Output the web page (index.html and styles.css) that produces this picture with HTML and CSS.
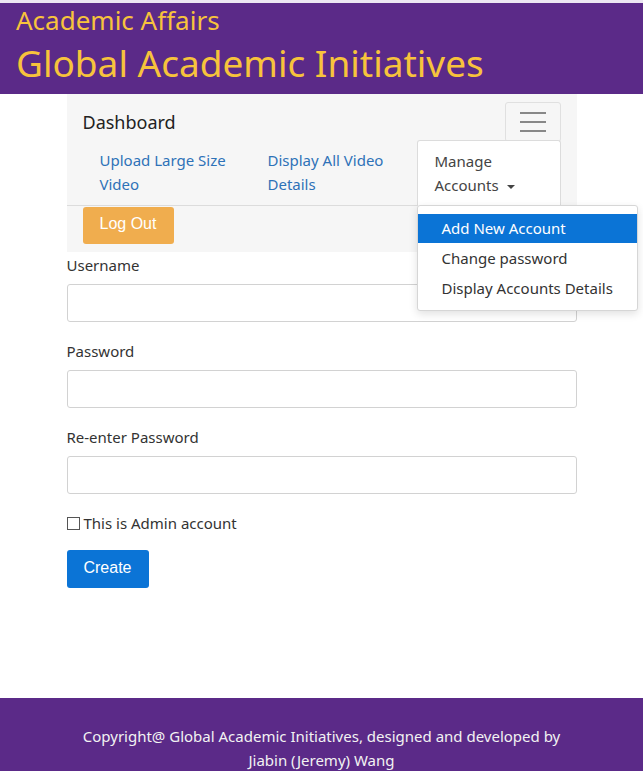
FILE: index.html
```html
<!DOCTYPE html>
<html lang="en">
<head>
<meta charset="utf-8">
<title>Add New Account</title>
<link rel="stylesheet" href="styles.css">
</head>
<body>
<header class="site-header">
  <div class="sub-title">Academic Affairs</div>
  <div class="main-title">Global Academic Initiatives</div>
</header>

<main class="page">
  <nav class="navbar">
    <div class="nav-head">
      <span class="brand">Dashboard</span>
      <button class="toggler" type="button" aria-label="Toggle navigation">
        <span class="bar"></span><span class="bar"></span><span class="bar"></span>
      </button>
    </div>
    <ul class="nav-links">
      <li class="nav-item w1"><a href="#">Upload Large Size Video</a></li>
      <li class="nav-item w2"><a href="#">Display All Video Details</a></li>
      <li class="nav-item w3 open"><a href="#">Manage Accounts <span class="caret"></span></a></li>
    </ul>
    <div class="nav-foot">
      <button class="btn-logout" type="button">Log Out</button>
    </div>
    <ul class="dropdown">
      <li class="active"><a href="#">Add New Account</a></li>
      <li><a href="#">Change password</a></li>
      <li><a href="#">Display Accounts Details</a></li>
    </ul>
  </nav>

  <form class="form">
    <label class="field-label" for="u">Username</label>
    <input class="field" id="u" type="text">
    <label class="field-label" for="p">Password</label>
    <input class="field" id="p" type="password">
    <label class="field-label" for="p2">Re-enter Password</label>
    <input class="field" id="p2" type="password">
    <label class="check"><input type="checkbox" class="check-box"> This is Admin account</label>
    <button class="btn-create" type="button">Create</button>
  </form>
</main>

<footer class="site-footer">
  Copyright@ Global Academic Initiatives, designed and developed by<br>
  Jiabin (Jeremy) Wang
</footer>
</body>
</html>
```

FILE: styles.css
```css
* { box-sizing: border-box; }
html, body { margin: 0; padding: 0; }
body {
  font-family: "Noto Sans", "Open Sans", sans-serif;
  font-size: 15px;
  color: #333;
  background: #fff;
  border-top: 3px solid #ece6f2;
  min-height: 771px;
  display: flex;
  flex-direction: column;
}
a { text-decoration: none; }
ul { list-style: none; margin: 0; padding: 0; }

.site-header {
  background: #5b2a88;
  color: #f7c33c;
  padding: 1px 16px 0;
  height: 91px;
}
.sub-title { font-size: 26px; line-height: 32px; }
.main-title { font-size: 37px; line-height: 54px; }

.page {
  width: 510px;
  margin: 0 auto;
  flex: 1;
}

.navbar {
  position: relative;
  background: #f6f6f6;
  padding-bottom: 8px;
}
.nav-head {
  display: flex;
  justify-content: space-between;
  align-items: flex-start;
  padding: 8px 16px 0;
  height: 46px;
}
.brand { font-size: 18px; line-height: 40px; color: #222; }
.toggler {
  width: 56px;
  height: 40px;
  border: 1px solid #e0e0e0;
  border-radius: 3px;
  background: transparent;
  display: flex;
  flex-direction: column;
  align-items: center;
  justify-content: center;
  gap: 7px;
  padding: 0;
}
.bar { display: block; width: 26px; height: 2px; background: #888; }

.nav-links {
  display: flex;
  padding: 0 16px;
  height: 66px;
  border-bottom: 1px solid #dcdcdc;
}
.nav-item { padding: 8px 17px 0; line-height: 24px; }
.nav-item a { color: #2e72b8; }
.w1 { width: 168px; }
.w2 { width: 166px; }
.w3 { width: 144px; }
.nav-item.open {
  background: #fff;
  border: 1px solid #dcdcdc;
  border-bottom: none;
  border-radius: 3px 3px 0 0;
  margin-bottom: -1px;
}
.nav-item.open a { color: #444; }
.caret {
  display: inline-block;
  width: 0; height: 0;
  border-left: 4px solid transparent;
  border-right: 4px solid transparent;
  border-top: 4px solid #444;
  vertical-align: middle;
  margin-left: 4px;
}

.nav-foot { padding: 1px 16px 0; }
.btn-logout {
  font-family: "Liberation Sans", Arial, sans-serif;
  font-size: 16px;
  color: #fff;
  background: #f0ad4e;
  border: none;
  border-radius: 3px;
  width: 91px;
  height: 37px;
  padding: 0 0 3px;
}

.dropdown {
  position: absolute;
  left: 350px;
  top: 111px;
  width: 221px;
  background: #fff;
  border: 1px solid #d6d6d6;
  border-radius: 3px;
  box-shadow: 0 3px 8px rgba(0,0,0,0.12);
  padding: 8px 0 7px;
  z-index: 5;
}
.dropdown li a {
  display: block;
  padding: 0 24px;
  line-height: 30px;
  color: #333;
  white-space: nowrap;
}
.dropdown li.active a { background: #0b74d6; color: #fff; line-height: 29px; }

.form { display: flex; flex-direction: column; align-items: flex-start; padding-top: 1px; }
.field-label { line-height: 24px; margin-bottom: 7px; color: #333; }
.field {
  width: 100%;
  height: 38px;
  border: 1px solid #d2d2d2;
  border-radius: 3px;
  margin-bottom: 17px;
  font: inherit;
}
.check { display: flex; align-items: center; line-height: 24px; gap: 4px; }
.check-box {
  appearance: none;
  width: 13px; height: 13px;
  border: 1px solid #555;
  margin: 0;
  background: #fff;
}
.btn-create {
  margin-top: 15px;
  font-family: "Liberation Sans", Arial, sans-serif;
  font-size: 16px;
  color: #fff;
  background: #0b74d6;
  border: none;
  border-radius: 3px;
  width: 82px;
  height: 38px;
  padding: 0 0 3px;
}

.site-footer {
  background: #5b2a88;
  color: #f2f2f2;
  text-align: center;
  font-size: 15px;
  line-height: 24px;
  padding: 26px 16px 0;
  height: 73px;
}
```
